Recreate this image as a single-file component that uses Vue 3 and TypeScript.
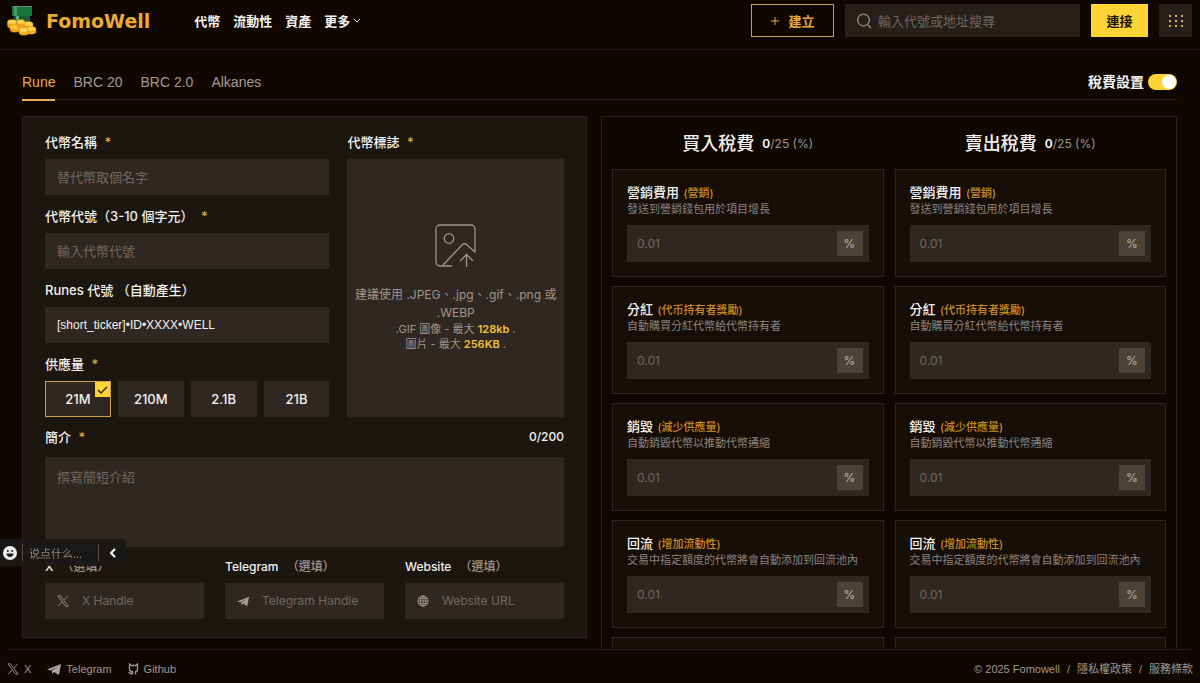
<script setup lang="ts">
import { ref } from 'vue'

interface TaxItem {
  key: string
  title: string
  tag: string
  desc: string
}

const navItems = ['代幣', '流動性', '資產']
const tabs = ['Rune', 'BRC 20', 'BRC 2.0', 'Alkanes']
const activeTab = ref('Rune')
const supplies = ['21M', '210M', '2.1B', '21B']
const supply = ref('21M')
const taxEnabled = ref(true)
const intro = ref('')

const taxItems: TaxItem[] = [
  { key: 'marketing', title: '營銷費用', tag: '(營銷)', desc: '發送到營銷錢包用於項目增長' },
  { key: 'dividend', title: '分紅', tag: '(代币持有者獎勵)', desc: '自動購買分紅代幣給代幣持有者' },
  { key: 'burn', title: '銷毀', tag: '(減少供應量)', desc: '自動銷毀代幣以推動代幣通縮' },
  { key: 'liquidity', title: '回流', tag: '(增加流動性)', desc: '交易中指定額度的代幣將會自動添加到回流池內' },
]
const taxSides = [
  { key: 'buy', title: '買入稅費' },
  { key: 'sell', title: '賣出稅費' },
]
const socials = [
  { key: 'x', label: 'X', placeholder: 'X Handle' },
  { key: 'telegram', label: 'Telegram', placeholder: 'Telegram Handle' },
  { key: 'website', label: 'Website', placeholder: 'Website URL' },
]
</script>

<template>
  <div class="page">
    <header class="header">
      <a class="brand" href="#">
        <svg class="logo" viewBox="0 0 30 30" aria-hidden="true">
          <rect x="7" y="9" width="16" height="11" fill="#1d5a37" />
          <rect x="9" y="9" width="3" height="11" fill="#5fae7c" />
          <rect x="5" y="0" width="20" height="10" fill="#17783d" />
          <rect x="5" y="0" width="20" height="1" fill="#6a8d72" />
          <rect x="7" y="1" width="3" height="9" fill="#4d9a69" />
          <g stroke="#d88c10" stroke-width=".4">
            <path d="M.5 16v4c0 3 9 3 9 0v-4z" fill="#f0a51c" />
            <ellipse cx="5" cy="16" rx="4.500" ry="2.500" fill="#ffd24a" />
            <path d="M3 21v3c0 3 10 3 10 0v-3z" fill="#f0a51c" />
            <ellipse cx="8" cy="21" rx="5" ry="2.500" fill="#ffc936" />
            <path d="M10 16v4c0 3 8 3 8 0v-4z" fill="#f0a51c" />
            <ellipse cx="14" cy="16" rx="4" ry="2.500" fill="#ffd24a" />
            <path d="M17 18v4c0 3 9 3 9 0v-4z" fill="#f0a51c" />
            <ellipse cx="21.500" cy="18" rx="4.500" ry="2.500" fill="#ffd24a" />
            <path d="M12 24v3c0 3 10 3 10 0v-3z" fill="#f6b02a" />
            <ellipse cx="17" cy="24" rx="5" ry="2.500" fill="#ffd85a" />
            <path d="M20 23v3c0 3 9 3 9 0v-3z" fill="#f6b02a" />
            <ellipse cx="24.500" cy="23" rx="4.500" ry="2.500" fill="#ffcf40" />
          </g>
        </svg>
        <span class="brand-name">FomoWell</span>
      </a>
      <nav class="nav">
        <a v-for="item in navItems" :key="item" href="#">{{ item }}</a>
        <button type="button" class="more">
          更多
          <svg viewBox="0 0 8 6" width="8" height="6" aria-hidden="true"><path d="M1 1l3 3 3-3" /></svg>
        </button>
      </nav>
      <div class="actions">
        <button type="button" class="create">
          <svg viewBox="0 0 10 10" width="10" height="10" aria-hidden="true"><path d="M5 1v8M1 5h8" /></svg>
          建立
        </button>
        <label class="search">
          <svg viewBox="0 0 16 16" width="16" height="16" aria-hidden="true"><circle cx="7.500" cy="7" r="5.800" /><path d="M11.500 11.500l3.500 3.500" /></svg>
          <input type="search" placeholder="輸入代號或地址搜尋" aria-label="輸入代號或地址搜尋">
        </label>
        <button type="button" class="connect">連接</button>
        <button type="button" class="apps" aria-label="Menu">
          <svg viewBox="0 0 16 16" width="16" height="16" aria-hidden="true">
            <template v-for="r in 3" :key="r">
              <rect v-for="c in 3" :key="c" :x="c * 6 - 5" :y="r * 5 - 3" width="2" height="2" />
            </template>
          </svg>
        </button>
      </div>
    </header>

    <main class="main">
      <div class="tabbar">
        <div class="tabs" role="tablist">
          <button
            v-for="tab in tabs"
            :key="tab"
            type="button"
            role="tab"
            class="tab"
            :class="{ active: tab === activeTab }"
            :aria-selected="tab === activeTab"
            @click="activeTab = tab"
          >{{ tab }}</button>
        </div>
        <label class="tax-switch">
          <span>稅費設置</span>
          <input v-model="taxEnabled" type="checkbox" role="switch">
        </label>
      </div>

      <div class="columns">
        <form class="panel form" @submit.prevent>
          <div class="top">
            <div class="fields">
              <div class="field">
                <label for="name">代幣名稱 <i>*</i></label>
                <input id="name" class="box" type="text" placeholder="替代幣取個名字">
              </div>
              <div class="field">
                <label for="ticker">代幣代號（3-10 個字元） <i>*</i></label>
                <input id="ticker" class="box" type="text" placeholder="輸入代幣代號">
              </div>
              <div class="field">
                <label for="rune">Runes 代號 （自動產生）</label>
                <input id="rune" class="box rune" type="text" value="[short_ticker]•ID•XXXX•WELL" readonly>
              </div>
              <fieldset class="field">
                <legend>供應量 <i>*</i></legend>
                <div class="supplies">
                  <label v-for="s in supplies" :key="s" class="supply" :class="{ chosen: s === supply }">
                    <input v-model="supply" type="radio" name="supply" :value="s">
                    {{ s }}
                    <svg v-if="s === supply" class="tick" viewBox="0 0 15 15" aria-hidden="true"><path d="M3 8l3 3 6-6" /></svg>
                  </label>
                </div>
              </fieldset>
            </div>
            <div class="field logo-field">
              <label for="logo">代幣標誌 <i>*</i></label>
              <label class="drop" for="logo">
                <svg viewBox="0 0 42 44" width="42" height="44" aria-hidden="true">
                  <path d="M17 42H5a4 4 0 0 1-4-4V5a4 4 0 0 1 4-4h31a4 4 0 0 1 4 4v23l-8.500-7.500c-1.500-1.200-3-1-4.500.5L8 41" />
                  <circle cx="14" cy="14.500" r="4.800" />
                  <path d="M31.500 43V31M25 37l6.500-6.500L38 37" />
                </svg>
                <span class="hint">建議使用 .JPEG、.jpg、.gif、.png 或 .WEBP</span>
                <span class="limit">.GIF 圖像 - 最大 <b>128kb</b> .</span>
                <span class="limit">圖片 - 最大 <b>256KB</b> .</span>
                <input id="logo" type="file" accept="image/*">
              </label>
            </div>
          </div>
          <div class="field intro">
            <div class="intro-head">
              <label for="intro">簡介 <i>*</i></label>
              <span>{{ intro.length }}/200</span>
            </div>
            <textarea id="intro" v-model="intro" class="box" maxlength="200" placeholder="撰寫簡短介紹"></textarea>
          </div>
          <div class="socials">
            <div v-for="s in socials" :key="s.key" class="social">
              <label :for="'social-' + s.key">{{ s.label }} <em>（選填）</em></label>
              <div class="box icon-box">
                <svg v-if="s.key === 'x'" viewBox="0 0 14 14" width="12" height="12" aria-hidden="true"><path class="line" d="M1 1h3l9 12h-3zM12.500 1L8 6M6 8l-4.500 5" /></svg>
                <svg v-else-if="s.key === 'telegram'" viewBox="0 0 14 14" width="12" height="12" aria-hidden="true"><path d="M0 7.500L14 2l-2 11-5-3-2 2V8.500L11 5 3.500 8.500z" /></svg>
                <svg v-else viewBox="0 0 14 14" width="12" height="12" aria-hidden="true"><circle class="line" cx="7" cy="7" r="6" /><ellipse class="line" cx="7" cy="7" rx="3" ry="6" /><path class="line" d="M1 7h12M2 4h10M2 10h10M7 1v12" /></svg>
                <input :id="'social-' + s.key" type="text" :placeholder="s.placeholder">
              </div>
            </div>
          </div>
        </form>

        <section v-if="taxEnabled" class="panel taxes">
          <div v-for="side in taxSides" :key="side.key" class="side">
            <h2>{{ side.title }} <span><b>0</b>/25 (%)</span></h2>
            <div v-for="item in taxItems" :key="item.key" class="tax-card">
              <label :for="side.key + item.key">{{ item.title }} <em>{{ item.tag }}</em></label>
              <p>{{ item.desc }}</p>
              <div class="tax-input">
                <input :id="side.key + item.key" type="text" inputmode="decimal" placeholder="0.01">
                <span>%</span>
              </div>
            </div>
            <div class="tax-card" aria-hidden="true"></div>
          </div>
        </section>
      </div>
    </main>

    <footer class="footer">
      <div class="links">
        <a href="#"><svg viewBox="0 0 14 14" width="12" height="12" aria-hidden="true"><path class="line" d="M1 1h3l9 12h-3zM12.500 1L8 6M6 8l-4.500 5" /></svg>X</a>
        <a href="#"><svg viewBox="0 0 14 12" width="14" height="12" aria-hidden="true"><path d="M0 6.500L14 1l-2 11-5-3-2 2V7.500L11 4 3.500 7.500z" /></svg>Telegram</a>
        <a href="#"><svg viewBox="0 0 11 12" width="11" height="12" aria-hidden="true"><path class="line bold" d="M4.500 11.500V8.500H3L1.500 7V1l2 1.500h4l2-1.500v6L8.500 8.500H7.500v3M4.500 10.500H2.500L.5 9" /></svg>Github</a>
      </div>
      <div class="legal">
        <span>© 2025 Fomowell</span><span>/</span><a href="#">隱私權政策</a><span>/</span><a href="#">服務條款</a>
      </div>
    </footer>

    <div class="chat">
      <svg viewBox="0 0 14 14" width="14" height="14" aria-hidden="true">
        <circle cx="7" cy="7" r="7" fill="#f2f0ee" />
        <circle cx="4.800" cy="5" r="1" fill="#1b1916" /><circle cx="9.200" cy="5" r="1" fill="#1b1916" />
        <path d="M3.500 7.500h7c0 4.500-7 4.500-7 0z" fill="#1b1916" />
      </svg>
      <input type="text" placeholder="说点什么..." aria-label="说点什么">
      <button type="button" aria-label="收起">
        <svg viewBox="0 0 6 10" width="6" height="10" aria-hidden="true"><path d="M5 1L1 5l4 4" /></svg>
      </button>
    </div>
  </div>
</template>

<style>
body {
  margin: 0;
  background: #100800;
}
</style>

<style scoped>
.page {
  --line: #2a2219;
  --box: #2f2722;
  --muted: #9b938b;
  --gold: #e9ab32;
  --yellow: #ffd334;
  display: flex;
  flex-direction: column;
  height: 100vh;
  overflow: hidden;
  color: #f4f1ee;
  background: #100800;
  font-family: Inter, "Noto Sans CJK TC", sans-serif;
  font-size: 13px;
  line-height: 20px;
}
.page * { box-sizing: border-box; }
button, input, textarea {
  margin: 0;
  padding: 0;
  border: 0;
  border-radius: 0;
  outline: 0;
  background: none;
  color: inherit;
  font: inherit;
}
button { cursor: pointer; }
a { color: inherit; text-decoration: none; }
i, em { font-style: normal; }
svg { flex: none; fill: none; }

.header {
  display: flex;
  align-items: center;
  flex: none;
  padding: 4px 8px 12px 7px;
  border-bottom: 1px solid #221a12;
}
.brand { display: flex; align-items: center; gap: 9px; height: 33px; }
.logo { width: 30px; height: 30px; }
.brand-name {
  color: var(--gold);
  font-family: "DejaVu Sans", sans-serif;
  font-size: 19px;
  font-weight: 700;
}
.nav {
  display: flex;
  gap: 13px;
  margin-left: 44px;
  font-weight: 700;
}
.nav a, .more { white-space: nowrap; }
.more { display: flex; align-items: center; gap: 3px; }
.more svg { stroke: #e5e0dc; }
.actions { display: flex; gap: 11px; margin-left: auto; height: 33px; }
.create {
  display: flex;
  align-items: center;
  justify-content: center;
  gap: 8px;
  width: 83px;
  border: 1px solid #c6a052;
  color: var(--gold);
  font-weight: 700;
}
.create svg { stroke: var(--gold); }
.search {
  display: flex;
  align-items: center;
  gap: 6px;
  width: 235px;
  padding: 0 11px;
  background: #271f19;
}
.search svg { stroke: #968d84; stroke-width: 1.300; }
.search input { flex: 1; min-width: 0; appearance: none; }
::placeholder { color: #71675e; opacity: 1; }
.connect {
  width: 57px;
  background: var(--yellow);
  color: #1b1303;
  font-weight: 700;
}
.apps {
  display: grid;
  place-items: center;
  width: 33px;
  background: #271f19;
}
.apps svg { fill: #d9b34d; }

.main {
  flex: 1;
  min-height: 0;
  overflow: hidden;
  padding: 0 23px 0 22px;
}
.tabbar {
  display: flex;
  justify-content: space-between;
  height: 50px;
  padding-top: 14px;
  border-bottom: 1px solid var(--line);
}
.tabs { display: flex; gap: 18px; height: 37px; }
.tab {
  border-bottom: 2px solid transparent;
  color: #a49a90;
  font-family: "Liberation Sans", sans-serif;
  font-size: 14px;
}
.tab.active { border-color: #e5ac4a; color: var(--gold); }
.tax-switch {
  display: flex;
  align-items: center;
  gap: 4px;
  height: 36px;
  font-size: 14px;
  font-weight: 700;
}
.tax-switch input {
  position: relative;
  appearance: none;
  width: 29px;
  height: 16px;
  border-radius: 8px;
  background: #5a5047;
}
.tax-switch input:checked { background: var(--yellow); }
.tax-switch input::after {
  content: "";
  position: absolute;
  top: 1px;
  left: 1px;
  width: 14px;
  height: 14px;
  border-radius: 50%;
  background: #fff;
}
.tax-switch input:checked::after { left: auto; right: 1px; }

.columns {
  display: grid;
  grid-template-columns: minmax(0, 565fr) minmax(0, 576fr);
  align-items: start;
  gap: 14px;
  padding-top: 16px;
}
.panel { border: 1px solid var(--line); }
.form {
  padding: 15px 22px 18px;
  background: #1b1610;
}
.top {
  display: grid;
  grid-template-columns: minmax(0, 285fr) minmax(0, 217fr);
  gap: 18px;
}
.fields { display: flex; flex-direction: column; gap: 11px; }
.field { min-width: 0; margin: 0; padding: 0; border: 0; }
.field > label:first-child, legend {
  display: block;
  margin-bottom: 7px;
  padding: 0;
  font-weight: 500;
}
.field i { margin-left: 4px; color: #dcb040; }
.box {
  display: block;
  width: 100%;
  height: 36px;
  padding: 0 12px;
  background: var(--box);
}
.rune { font-family: "Liberation Sans", sans-serif; font-size: 12px; }
.supplies { display: grid; grid-template-columns: repeat(4, minmax(0, 1fr)); gap: 7px; }
.supply {
  position: relative;
  display: grid;
  place-items: center;
  height: 36px;
  background: var(--box);
  font-weight: 500;
}
.supply.chosen { border: 1px solid #cda24a; }
.supply input { position: absolute; opacity: 0; }
.tick {
  position: absolute;
  top: 0;
  right: 0;
  width: 15px;
  height: 15px;
  background: var(--yellow);
  stroke: #2a1e05;
  stroke-width: 1.400;
}
.logo-field { display: flex; flex-direction: column; }
.drop {
  display: flex;
  flex: 1;
  flex-direction: column;
  align-items: center;
  justify-content: center;
  padding: 0 4px;
  background: var(--box);
  color: #a0968c;
  text-align: center;
}
.drop svg { margin-bottom: 18px; stroke: #a0968c; stroke-width: 1.300; }
.drop input { position: absolute; opacity: 0; pointer-events: none; width: 1px; height: 1px; }
.hint { font-size: 12px; line-height: 18px; }
.limit { font-size: 11px; line-height: 15px; }
.limit b { color: #f3c333; font-weight: 600; }
.intro { margin-top: 10px; }
.intro-head { display: flex; justify-content: space-between; margin-bottom: 10px; font-weight: 500; }
.intro-head span { font-size: 12px; }
textarea.box { height: 90px; padding-top: 10px; resize: none; }
.socials {
  display: grid;
  grid-template-columns: repeat(3, minmax(0, 1fr));
  gap: 21px;
  margin-top: 10px;
}
.social > label {
  display: block;
  margin-bottom: 6px;
  font-size: 12px;
  font-weight: 500;
}
.social em { margin-left: 5px; color: #a0968c; }
.icon-box { display: flex; align-items: center; gap: 13px; font-size: 12px; }
.icon-box svg { fill: #a59b91; }
.icon-box input { flex: 1; min-width: 0; }
.line { fill: none; stroke: #a59b91; }
.line.bold { stroke-width: 1.300; }

.taxes {
  display: grid;
  grid-template-columns: repeat(2, minmax(0, 1fr));
  gap: 11px;
  padding: 10px;
}
.side { display: flex; flex-direction: column; gap: 9px; min-width: 0; }
h2 {
  display: flex;
  align-items: center;
  justify-content: center;
  gap: 8px;
  margin: 0;
  height: 33px;
  font-size: 18px;
  font-weight: 500;
}
h2 span { color: var(--muted); font-size: 12px; font-weight: 400; }
h2 b { color: #fff; font-weight: 600; }
.tax-card {
  min-height: 108px;
  padding: 14px;
  border: 1px solid #2d251c;
  background: #170e08;
}
.tax-card label { display: block; line-height: 16px; font-weight: 500; }
.tax-card em { margin-left: 1px; color: #c98c20; font-size: 11px; }
.tax-card p { margin: 0 0 8px; color: #8c847d; font-size: 11px; line-height: 16px; }
.tax-input {
  display: flex;
  align-items: center;
  height: 37px;
  padding: 0 6px 0 10px;
  background: var(--box);
}
.tax-input input { flex: 1; min-width: 0; font-size: 12px; }
.tax-input span {
  display: grid;
  place-items: center;
  width: 26px;
  height: 25px;
  background: #4b4337;
  color: #bdb4a9;
  font-size: 12px;
}

.footer {
  display: flex;
  align-items: center;
  justify-content: space-between;
  flex: none;
  height: 34px;
  margin: 0 7px;
  border-top: 1px solid #241b11;
  padding-top: 4px;
  color: #a0968c;
  font-family: "Liberation Sans", "Noto Sans CJK TC", sans-serif;
  font-size: 11px;
}
.links, .legal { display: flex; }
.links { gap: 16px; }
.links a { display: flex; align-items: center; gap: 5px; }
.links svg { fill: #b0a69c; }
.legal { gap: 7px; }

.chat {
  position: fixed;
  left: 0;
  bottom: 117px;
  display: flex;
  align-items: center;
  width: 126px;
  height: 27px;
  padding-left: 3px;
  border-radius: 0 3px 3px 0;
  background: rgba(25, 24, 22, .94);
  font-family: "Noto Sans CJK SC", sans-serif;
  font-size: 11px;
}
.chat input {
  width: 77px;
  height: 17px;
  margin-left: 5px;
  padding-left: 6px;
  border: solid #514a43;
  border-width: 0 1px;
}
.chat input::placeholder { color: #8c8681; }
.chat button { display: grid; place-items: center; flex: 1; height: 27px; }
.chat button svg { stroke: #fff; stroke-width: 2; }
</style>
